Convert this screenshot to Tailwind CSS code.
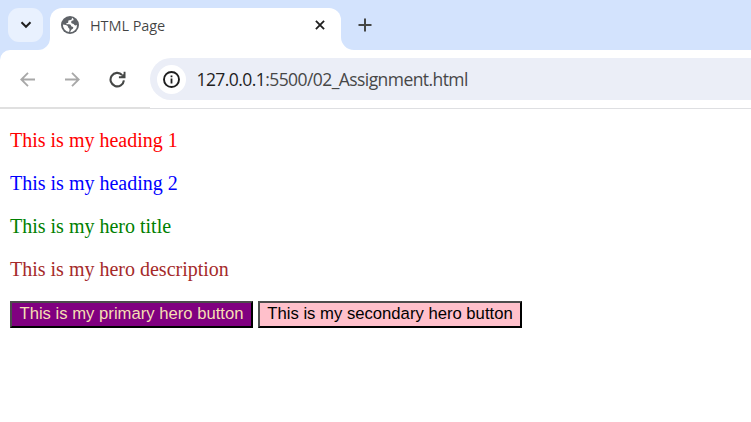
<!DOCTYPE html>
<html lang="en">
<head>
<meta charset="utf-8">
<title>HTML Page</title>
<script src="https://cdn.jsdelivr.net/npm/@tailwindcss/browser@4"></script>
</head>
<body class="w-[751px] h-[422px] overflow-hidden bg-white">
<header class="font-['Open_Sans',sans-serif]">
  <div class="relative flex h-[50px] bg-[#d3e3fd] pt-2 pl-2">
    <button class="flex h-[34px] w-[35px] items-center justify-center rounded-[11px] bg-[#e9f1fe]" aria-label="Search tabs">
      <svg width="12" height="8" viewBox="0 0 12 8" fill="none" stroke="#1f1f1f" stroke-width="2"><path d="M1.5 1.3 6 5.8l4.5-4.5"/></svg>
    </button>
    <div class="relative ml-[7px] flex h-[42px] w-[290.5px] items-start rounded-t-[12px] bg-white pl-[11px] pt-2">
      <svg class="absolute -left-3 bottom-0" width="12" height="12" viewBox="0 0 12 12" fill="#fff"><path d="M0 12A12 12 0 0 0 12 0V12Z"/></svg>
      <svg class="absolute -right-[13px] bottom-0" width="13" height="13" viewBox="0 0 13 13" fill="#fff"><path d="M0 0A13 13 0 0 0 13 13H0Z"/></svg>
      <svg width="18" height="18" viewBox="0 0 18 18"><circle cx="9" cy="9" r="9" fill="#5f6368"/><path fill="#fff" d="M11 1.8c0 1.8-.9 2.4-2.4 2.4-1.2 0-1.5.6-1.3 1.5.1.8-.4 1.3-1.2 1.3-.6 0-.8.6-.7 1.2 1.2.1 4-.2 4.4.8.3 1 .4 1.7 1.6 1.8 1 .1 1.1 1.1.6 1.8-.5.9-1.7.8-2 1.7-.3 1-.7 1.6-1.1 2A7.1 7.1 0 0 0 16 8.7c-.8.9-2 1-2.6.3-.5-.7-.4-1.2-1.4-1.3-1.3-.1-1.9-.8-1.8-1.7.1-1.1 1-1.3 1.9-1.4 1-.3.7-1.9-1.1-2.8ZM1.9 8.6c1.6.1 4.8.8 5.2 2.1.2.8.1 1.3.8 1.6 1 .5.6 1.9.2 3.8a7.2 7.2 0 0 1-6.2-7.5Z"/></svg>
      <span class="ml-[11px] w-[76px] whitespace-nowrap text-[14.5px] leading-[19px] tracking-[-0.08px] text-[#1f1f1f]/85">HTML Page</span>
      <svg class="ml-[149px] mt-[4px]" width="10" height="10" viewBox="0 0 11 11" stroke="#1f1f1f" stroke-width="2"><path d="m1 1 9 9M10 1l-9 9"/></svg>
    </div>
    <svg class="ml-[17.5px] mt-[10px]" width="14" height="14" viewBox="0 0 14 14" stroke="#454746" stroke-width="2"><path d="M7 .5v13M.5 7h13"/></svg>
  </div>
  <div class="relative flex h-[57px] items-center bg-white pb-px pl-5">
    <svg class="absolute left-0 top-0" width="10" height="10" viewBox="0 0 10 10" fill="#d3e3fd"><path d="M0 0H10A10 10 0 0 0 0 10Z"/></svg>
    <svg class="mt-[2px]" width="15" height="15" viewBox="0 0 15 15" fill="none" stroke="#a8a8a8" stroke-width="1.8"><path d="M15 7.5H1.5M8 .8 1.3 7.5 8 14.2"/></svg>
    <svg class="ml-[30px] mt-[2px]" width="15" height="15" viewBox="0 0 15 15" fill="none" stroke="#a8a8a8" stroke-width="1.8"><path d="M0 7.5h13.5M7 .8l6.7 6.7L7 14.2"/></svg>
    <svg class="ml-[29px] mt-[2px]" width="17" height="17" viewBox="0 0 17 17"><path fill="none" stroke="#454746" stroke-width="2.1" d="M14.9 9.3A6.7 6.7 0 1 1 13.2 4.1"/><path fill="#454746" d="M16.5.8V7.2H9.9V5.3h2.3L14.6 3V.8Z"/></svg>
    <div class="ml-[24px] mt-[2px] flex h-[42px] flex-1 items-center rounded-l-full bg-[#ebeef7] pl-[7px]">
      <div class="flex size-[29px] items-center justify-center rounded-full bg-white">
        <svg width="17" height="17" viewBox="0 0 17 17"><circle cx="8.5" cy="8.5" r="7.5" fill="none" stroke="#1f1f1f" stroke-width="1.9"/><path fill="#1f1f1f" d="M7.6 4.4h1.8v1.8H7.6zM7.6 7.5h1.8v5H7.6z"/></svg>
      </div>
      <span class="ml-[10.5px] whitespace-nowrap text-[17.5px] leading-6 tracking-[-0.57px] text-[#474747]"><span class="text-[#1f1f1f]">127.0.0.1</span>:5500/02_Assignment.html</span>
    </div>
  </div>
  <div class="flex h-[2px]"><div class="h-[2px] w-[150px] bg-[#e0e0e0]"></div><div class="mt-px h-px flex-1 bg-[#dedfe2]"></div></div>
</header>
<main class="flex flex-col gap-5 px-[10px] pt-5 font-['Liberation_Serif',serif] text-[20px] leading-[23px]">
  <p class="text-[#ff0000]">This is my heading 1</p>
  <p class="text-[#0000ff]">This is my heading 2</p>
  <p class="text-[#008000]">This is my hero title</p>
  <p class="text-[#a52a2a]">This is my hero description</p>
  <div class="flex gap-[5px] font-['Liberation_Sans',sans-serif] text-[16.667px] leading-[19px]">
    <button class="h-[27px] w-[243px] whitespace-nowrap border-2 border-t-[#4c4c4c] border-l-[#4c4c4c] border-r-black border-b-black bg-[#800080] pb-[2px] text-[#f5deb3]">This is my primary hero button</button>
    <button class="h-[27px] w-[264px] whitespace-nowrap border-2 border-t-[#4c4c4c] border-l-[#4c4c4c] border-r-black border-b-black bg-[#ffc0cb] pb-[2px] text-black">This is my secondary hero button</button>
  </div>
</main>
</body>
</html>
